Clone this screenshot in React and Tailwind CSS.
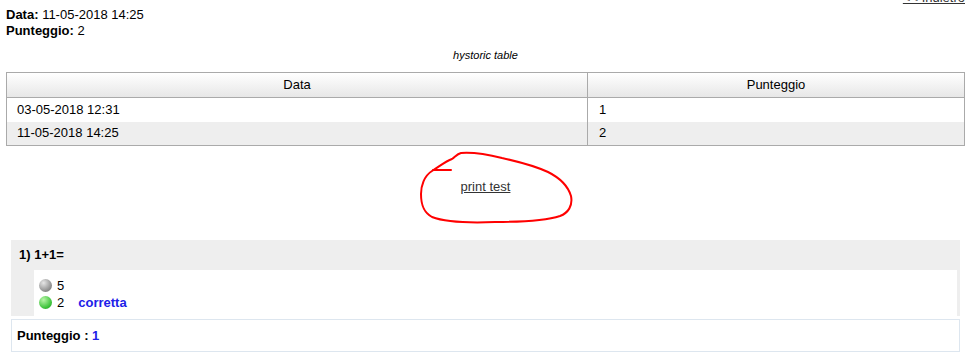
import React from 'react';

// Storico dei test svolti
const storico = [
  { data: '03-05-2018 12:31', punteggio: '1' },
  { data: '11-05-2018 14:25', punteggio: '2' },
];

export default function App() {
  return (
    <div className="w-[959px] ml-[6px] text-[13px] text-black font-['Liberation_Sans',Arial,sans-serif] leading-[16px]">
      {/* intestazione con link indietro */}
      <div className="flex justify-between">
        <div className="pt-[7px]">
          <div><b>Data:</b> 11-05-2018 14:25</div>
          <div><b>Punteggio:</b> 2</div>
        </div>
        <a href="#" className="-mt-[10px] h-[16px] text-[#333] underline">&lt;&lt; Indietro</a>
      </div>

      <div className="mt-[9px] text-center text-[11px] italic leading-[14px]">hystoric table</div>

      <table className="mt-[10px] w-full border-collapse border border-[#aaa]">
        <thead>
          <tr className="h-[25px] bg-gradient-to-b from-white to-[#e6e6e6]">
            <th className="w-[581px] border border-[#aaa] font-normal">Data</th>
            <th className="border border-[#aaa] font-normal">Punteggio</th>
          </tr>
        </thead>
        <tbody>
          {storico.map((r, i) => (
            <tr key={r.data} className={`h-[24px] ${i % 2 ? 'bg-[#eeeeee]' : 'bg-white'}`}>
              <td className="pl-[10px] border-r border-[#aaa]">{r.data}</td>
              <td className="pl-[11px]">{r.punteggio}</td>
            </tr>
          ))}
        </tbody>
      </table>

      {/* link stampa, cerchiato a mano */}
      <div className="relative h-[94px] flex justify-center pt-[33px]">
        <a href="#" className="h-[16px] text-[#333] underline">print test</a>
        <svg className="absolute left-[404px] top-0 pointer-events-none" width="176" height="86" viewBox="0 0 176 86">
          <g transform="translate(-410,-146)" fill="none" stroke="#ff0000" strokeWidth="2" strokeLinecap="round" strokeLinejoin="round">
            <path d="M432 171 C440 166 446 161 452 159 C455 157 457 154 461 153 C475 152 490 155 502 158 C520 162 535 166 548 172 C560 178 568 186 571 196 C573 206 568 213 560 216 C545 221 520 222 495 222 C470 223 445 222 432 217 C423 212 421 204 421 194 C421 186 424 176 432 171 Z" />
            <path d="M433 170 L451 170" />
          </g>
        </svg>
      </div>

      {/* domanda */}
      <div className="mx-[5px] bg-[#eeeeee]">
        <div className="h-[30px] pl-[8px] flex items-center font-bold">1) 1+1=</div>
        <div className="ml-[23px] mr-[3px] mb-[3px] bg-white pt-[7px] pb-[5px] pl-[5px]">
          <div className="flex items-center h-[17px]">
            <span className="w-[13px] h-[13px] rounded-full bg-[radial-gradient(circle_at_35%_30%,#e6e6e6,#8a8a8a_70%,#666)]" />
            <span className="ml-[5px]">5</span>
          </div>
          <div className="flex items-center h-[17px]">
            <span className="w-[13px] h-[13px] rounded-full bg-[radial-gradient(circle_at_35%_30%,#b8f5a8,#3cc23a_65%,#1f8f1f)]" />
            <span className="ml-[5px]">2</span>
            <span className="ml-[14px] font-bold text-[#2020e8]">corretta</span>
          </div>
        </div>
      </div>
      <div className="mx-[5px] h-[33px] border border-[#dde6ef] bg-white pl-[5px] flex items-center font-bold">
        Punteggio :&nbsp;<span className="text-[#2020e8]">1</span>
      </div>
    </div>
  );
}
